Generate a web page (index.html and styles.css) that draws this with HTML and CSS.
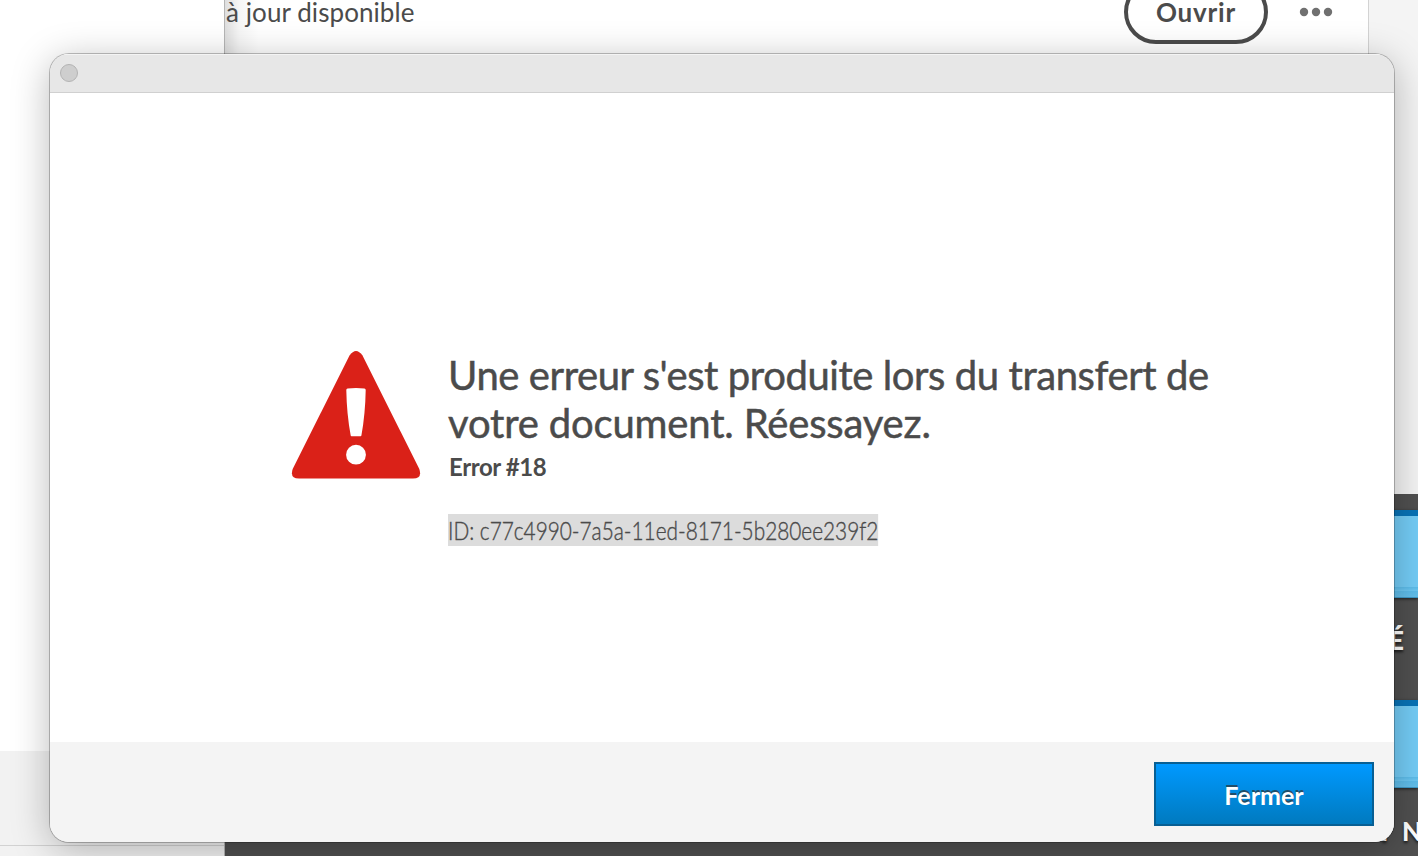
FILE: index.html
```html
<!DOCTYPE html>
<html lang="fr">
<head>
  <meta charset="UTF-8" />
  <meta name="viewport" content="width=device-width, initial-scale=1.0" />
  <title>Transfert du document</title>
  <link rel="stylesheet" href="styles.css">
</head>
<body>
  <div class="desktop">
    <aside class="sidebar">
      <div class="sidebar-top"></div>
      <div class="sidebar-bottom"></div>
      <div class="sidebar-status"></div>
    </aside>
    <main class="main">
      <div class="apps">
        <div class="app-row">
          <span class="app-status">à jour disponible</span>
          <button class="open">Ouvrir</button>
          <svg class="more" width="34" height="10" viewBox="0 0 34 10">
            <circle cx="5" cy="5" r="4.2" />
            <circle cx="17" cy="5" r="4.2" />
            <circle cx="29" cy="5" r="4.2" />
          </svg>
        </div>
        <div class="gutter"></div>
      </div>
      <div class="dock">
        <div class="folder"></div>
        <div class="folder-name">É</div>
        <div class="folder"></div>
        <div class="folder-name last">Y N</div>
      </div>
    </main>
  </div>

  <div class="window">
    <div class="titlebar"><span class="close-dot"></span></div>
    <div class="content">
      <svg class="alert" width="130" height="130" viewBox="0 0 130 130">
        <path fill="#da2118" d="M58.5 5.5 Q65 -3.5 71.5 5.5 L128.3 119 Q131.500 128.500 122 128.500 H8 Q-1.500 128.500 1.700 119 Z" />
        <path fill="#fff" d="M55.300 40 Q55.300 38.700 56.600 38.500 Q65 37.300 73.400 38.500 Q74.700 38.700 74.700 40 Q74.300 64 70.400 85.500 Q70.200 86.200 69.500 86.200 H60.500 Q59.800 86.200 59.700 85.500 Q55.700 64 55.300 40 Z" />
        <circle fill="#fff" cx="65" cy="104.700" r="9.900" />
      </svg>
      <div class="message">
        <h1><span class="line-one">Une erreur s'est produite lors du transfert de</span><br><span class="line-two">votre document. Réessayez.</span></h1>
        <div class="error-code">Error #18</div>
        <div class="error-id"><span>ID: c77c4990-7a5a-11ed-8171-5b280ee239f2</span></div>
      </div>
    </div>
    <div class="footer">
      <button class="close">Fermer</button>
    </div>
  </div>
</body>
</html>
```

FILE: styles.css
```css
* {
  box-sizing: border-box;
}
body {
  margin: 0;
  height: 856px;
  overflow: hidden;
  font-family: Lato, "Noto Sans", sans-serif;
  color: #4b4b4b;
  background: #fff;
}
.desktop {
  display: flex;
  height: 856px;
}
.sidebar {
  display: flex;
  flex-direction: column;
  width: 225px;
  border-right: 1px solid #b5b5b5;
}
.sidebar-top {
  height: 751px;
  background: #fff;
}
.sidebar-bottom {
  height: 95px;
  background: #f2f2f2;
  border-bottom: 1px solid #d2d2d2;
}
.sidebar-status {
  flex: 1;
  background: #f2f2f2;
}
.main {
  display: flex;
  flex-direction: column;
  flex: 1;
}
.apps {
  display: flex;
  height: 494px;
}
.app-row {
  display: flex;
  align-items: flex-start;
  flex: 1;
  background: linear-gradient(90deg, rgba(0,0,0,0.13), rgba(0,0,0,0.04) 14px, rgba(0,0,0,0) 34px);
  border-right: 1px solid #d3d3d3;
}
.app-status {
  flex: 1;
  font-size: 26px;
  line-height: 32px;
  margin-top: -4px;
  padding-left: 1px;
  letter-spacing: 0.08px;
}
.open {
  width: 144px;
  height: 64px;
  margin: -20px 31px 0 0;
  padding: 0;
  border: 4px solid #4b4b4b;
  border-radius: 32px;
  background: transparent;
  color: #4b4b4b;
  font: bold 26px Lato, sans-serif;
  letter-spacing: 0.8px;
}
.more {
  margin: 7px 35px 0 0;
  fill: #707070;
}
.gutter {
  width: 49px;
  background: #f4f4f4;
}
.dock {
  display: flex;
  flex-direction: column;
  align-items: flex-end;
  flex: 1;
  padding-top: 16px;
  overflow: hidden;
  background: #505050;
}
.folder {
  flex: none;
  width: 60px;
  height: 88px;
  border-top: 6px solid #0873b7;
  border-bottom: 1px solid #3f9ac8;
  background: linear-gradient(#74cdf7 88%, #5dbdeb 88%, #6dc8f3 92%, #5dbdeb 93%, #66c1ed);
  box-shadow: 0 1px 3px rgba(0,0,0,0.6);
}
.folder-name {
  flex: none;
  height: 102px;
  padding: 27px 14px 0 0;
  font-size: 26px;
  line-height: 30px;
  font-weight: 900;
  color: #fff;
  text-shadow: 0 2px 3px rgba(0,0,0,0.7);
}
.folder-name.last {
  padding: 28px 0 0;
  margin-right: -4px;
  word-spacing: 4px;
}
.window {
  position: absolute;
  left: 50px;
  top: 54px;
  display: flex;
  flex-direction: column;
  width: 1344px;
  height: 788px;
  border-radius: 19px;
  overflow: hidden;
  background: #fff;
  box-shadow: 0 0 0 1px rgba(0,0,0,0.24), 0 7px 38px rgba(0,0,0,0.28);
}
.titlebar {
  flex: none;
  height: 39px;
  padding: 9px 10px;
  background: #e7e7e7;
  border-top: 1px solid #f4f4f4;
  border-bottom: 1px solid #d0d0d0;
}
.close-dot {
  display: block;
  width: 18px;
  height: 18px;
  border: 1px solid #b3b3b3;
  border-radius: 50%;
  background: #cecece;
}
.content {
  flex: none;
  display: flex;
  height: 649px;
  padding: 257px 0 0 241px;
}
.alert {
  flex: none;
}
.message {
  margin-left: 28px;
  white-space: nowrap;
}
h1 {
  margin: 1px 0 0 -1px;
  font-size: 40px;
  line-height: 48px;
  font-weight: normal;
  -webkit-text-stroke: 0.5px #4b4b4b;
}
.line-one {
  letter-spacing: -0.42px;
}
.line-two {
  letter-spacing: -0.17px;
}
.error-code {
  margin-top: 2px;
  font-size: 24px;
  line-height: 36px;
  font-weight: bold;
  letter-spacing: -0.4px;
}
.error-id {
  width: 440px;
  margin: 29px 0 0 -1px;
  font-size: 25px;
  line-height: 33px;
  font-weight: 300;
  -webkit-text-stroke: 0.4px #4b4b4b;
}
.error-id span {
  display: inline-block;
  height: 32px;
  background: #dcdcdc;
  transform: scaleX(0.832);
  transform-origin: left;
}
.footer {
  display: flex;
  justify-content: flex-end;
  flex: 1;
  padding: 20px;
  background: #f4f4f4;
}
.close {
  width: 220px;
  height: 64px;
  padding: 1px 0 0;
  border: 2px solid #075f94;
  background: linear-gradient(#0099ff, #007abf);
  color: #fff;
  font: bold 25px Lato, sans-serif;
  text-shadow: 0 -2px 0 rgba(50,50,50,0.7);
}
```
